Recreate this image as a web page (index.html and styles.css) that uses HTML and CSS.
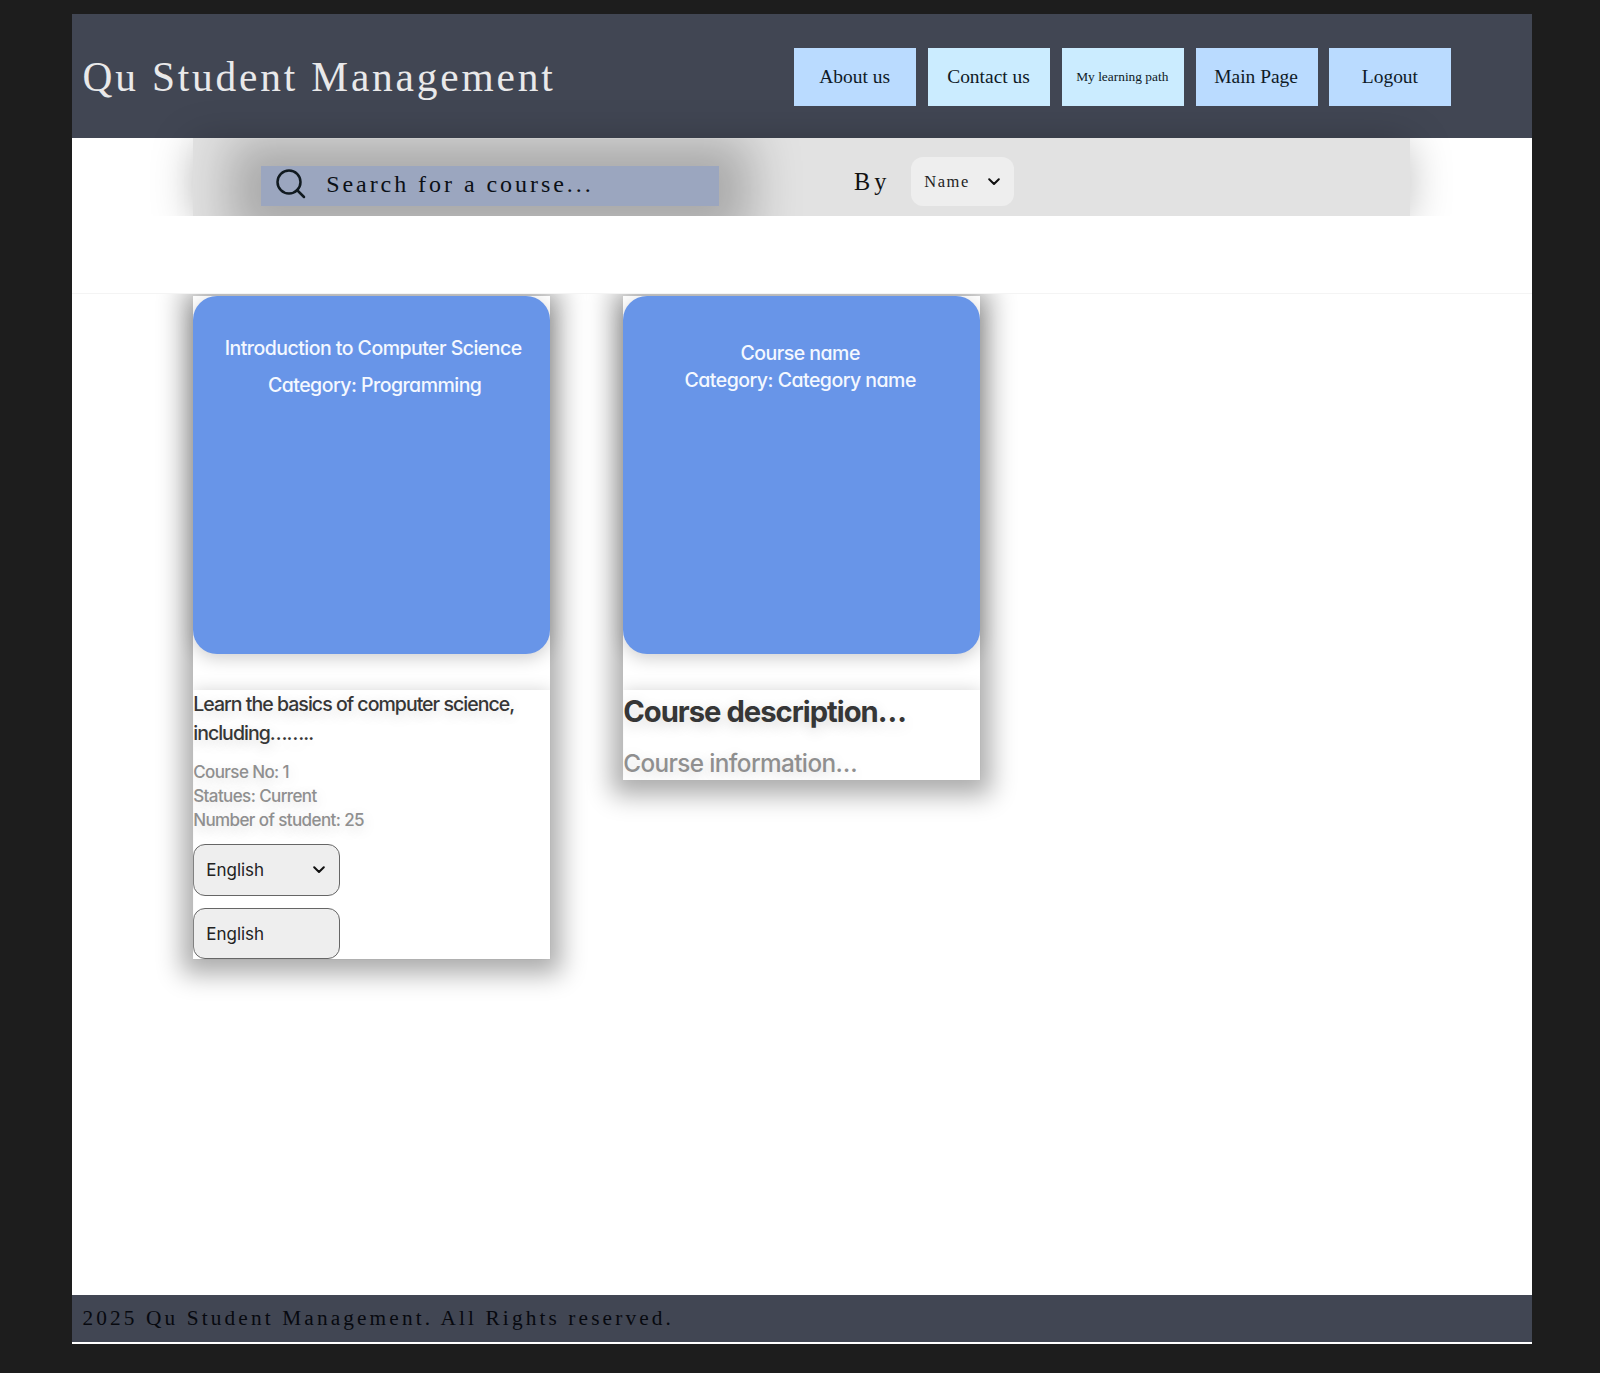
FILE: index.html
```html
<!DOCTYPE html>
<html lang="en">
<head>
<meta charset="utf-8">
<title>Qu Student Management</title>
<link rel="stylesheet" href="styles.css">
</head>
<body>
<div class="page">
  <header class="header">
    <h1 class="brand">Qu Student Management</h1>
    <nav class="nav">
      <a class="nav-item">About us</a>
      <a class="nav-item light">Contact us</a>
      <a class="nav-item light small">My learning path</a>
      <a class="nav-item">Main Page</a>
      <a class="nav-item">Logout</a>
    </nav>
  </header>
  <div class="toolbar">
    <div class="search">
      <svg class="search-icon" viewBox="0 0 30 30"><circle cx="13" cy="13" r="11.5"/><path d="M21 21l7 7"/></svg>
      <span class="search-text">Search for a course...</span>
    </div>
    <span class="by">By</span>
    <div class="select select-name">
      <span>Name</span>
      <svg class="chevron" viewBox="0 0 12 8"><path d="M1.2 1.2L6 6l4.8-4.8"/></svg>
    </div>
  </div>
  <div class="band"></div>
  <main class="courses">
    <article class="card">
      <div class="cover">
        <p class="intro">Introduction to Computer Science</p>
        <p class="category">Category: Programming</p>
      </div>
      <div class="details">
        <p class="desc">Learn the basics of computer science,<br>including……..</p>
        <p class="info">Course No: 1<br>Statues: Current<br>Number of student: 25</p>
        <div class="select select-lang">
          <span>English</span>
          <svg class="chevron" viewBox="0 0 12 8"><path d="M1.2 1.2L6 6l4.8-4.8"/></svg>
        </div>
        <div class="select select-lang"><span>English</span></div>
      </div>
    </article>
    <article class="card">
      <div class="cover cover-plain">
        <p class="category">Course name<br>Category: Category name</p>
      </div>
      <div class="details">
        <h2 class="desc-large">Course description…</h2>
        <p class="info-large">Course information…</p>
      </div>
    </article>
  </main>
  <footer class="footer">2025 Qu Student Management. All Rights reserved.</footer>
</div>
</body>
</html>
```
FILE: styles.css
```css
* { box-sizing: border-box; margin: 0; }
body {
  background: #1d1d1d;
  padding: 14px 68px 0 71.6px;
  height: 1373px;
  font-family: "Liberation Serif", serif;
  color: #111;
}
.page {
  display: flex;
  flex-direction: column;
  height: 1330px;
  background: #fff;
}
.header {
  display: flex;
  align-items: center;
  justify-content: space-between;
  height: 124.4px;
  flex: none;
  padding: 1.4px 80.6px 0 10.9px;
  background: #414653;
}
.brand {
  font-size: 41.4px;
  font-weight: 400;
  letter-spacing: 2.82px;
  color: #e9e9ea;
}
.nav { display: flex; gap: 11.8px; }
.nav-item {
  display: flex;
  align-items: center;
  justify-content: center;
  width: 122px;
  height: 58.6px;
  padding: 0 1px 0 0;
  background: #badbff;
  color: #0f1a26;
  font-size: 19.47px;
}
.light { background: #cbecff; }
.small { font-size: 13.4px; }
.toolbar {
  display: flex;
  flex: none;
  align-items: center;
  height: 77.5px;
  margin: 0 121.6px;
  padding-left: 68px;
  background: #e2e2e2;
  box-shadow: 0 5px 42px rgba(0, 0, 0, 0.25);
}
.search {
  display: flex;
  align-items: center;
  width: 458px;
  height: 40px;
  margin-top: 17.6px;
  padding-left: 14.8px;
  background: #9ba6bf;
  box-shadow: 0 4px 50px 32px rgba(0, 0, 0, 0.25);
  clip-path: inset(-27.6px -120px -11px);
}
.search-icon {
  width: 30px;
  height: 30px;
  margin-bottom: 4px;
  fill: none;
  stroke: #111a20;
  stroke-width: 2.5;
  stroke-linecap: round;
}
.search-text {
  margin: 0 0 2px 20.2px;
  font-size: 24px;
  letter-spacing: 2.95px;
  color: #0b1016;
}
.by {
  width: 57px;
  margin: 9px 0 0 134.8px;
  font-size: 24.3px;
  letter-spacing: 4px;
}
.select {
  display: flex;
  align-items: center;
  justify-content: space-between;
  border-radius: 12px;
  background: #eee;
  color: #222;
}
.chevron {
  width: 12px;
  height: 8px;
  fill: none;
  stroke: #111;
  stroke-width: 2;
  stroke-linecap: round;
  stroke-linejoin: round;
}
.select-name {
  width: 102.6px;
  height: 49.6px;
  margin-top: 9px;
  padding: 0 13.3px 0 13.2px;
  font-size: 16.5px;
  letter-spacing: 1.6px;
}
.band {
  position: relative;
  flex: none;
  height: 78.6px;
  background: #fff;
  border-bottom: 1.6px solid #f4f4f4;
}
.courses {
  display: flex;
  align-items: flex-start;
  gap: 73px;
  padding: 2px 0 0 121.6px;
  font-family: Inter, sans-serif;
}
.card {
  width: 357px;
  background: #fff;
  box-shadow: 0 4px 24px 11px rgba(0, 0, 0, 0.33);
}
.cover {
  height: 357.2px;
  padding-top: 37.5px;
  border-radius: 24px;
  background: #6895e8;
  box-shadow: 0 4px 18px rgba(0, 0, 0, 0.2);
  color: #f4f8ff;
  text-align: center;
  font-size: 19.5px;
  font-weight: 500;
}
.cover-plain { padding-top: 43.6px; }
.intro { padding-left: 3px; line-height: 29px; letter-spacing: -0.53px; }
.category {
  font-feature-settings: "cv11";
  letter-spacing: -0.52px;
  line-height: 27px;
}
.intro + .category { padding-left: 6px; margin-top: 9px; }
.cover-plain .category { padding-right: 3px; }
.details {
  margin-top: 36.4px;
  background: #fff;
  box-shadow: 0 2px 17px rgba(0, 0, 0, 0.2);
  clip-path: inset(-36px 0 0);
  text-shadow: 0 4px 14px rgba(0, 0, 0, 0.17);
}
.desc {
  font-size: 19.5px;
  font-weight: 500;
  line-height: 29.2px;
  letter-spacing: -0.97px;
  color: #363636;
}
.info {
  margin: 11.5px 0 12px;
  font-size: 17px;
  font-weight: 500;
  line-height: 24px;
  letter-spacing: -0.6px;
  color: #8f8f8f;
}
.select-lang {
  width: 146.5px;
  height: 51.7px;
  padding: 0 14px 0 12px;
  border: 1px solid #666;
  font-size: 17px;
  text-shadow: none;
}
.select-lang + .select-lang { margin-top: 12px; padding-top: 1px; }
.desc-large {
  padding-top: 4px;
  font-size: 29.2px;
  font-weight: 700;
  line-height: 36px;
  letter-spacing: -1px;
  color: #363636;
}
.info-large {
  padding: 17px 0 1px;
  font-size: 24.3px;
  font-weight: 500;
  line-height: 32px;
  letter-spacing: -0.6px;
  color: #8f8f8f;
}
.footer {
  margin-top: auto;
  margin-bottom: 2.5px;
  flex: none;
  height: 46.5px;
  padding-left: 10.9px;
  background: #414653;
  color: #07090f;
  font-size: 21.3px;
  line-height: 46px;
  letter-spacing: 3.13px;
}
```
